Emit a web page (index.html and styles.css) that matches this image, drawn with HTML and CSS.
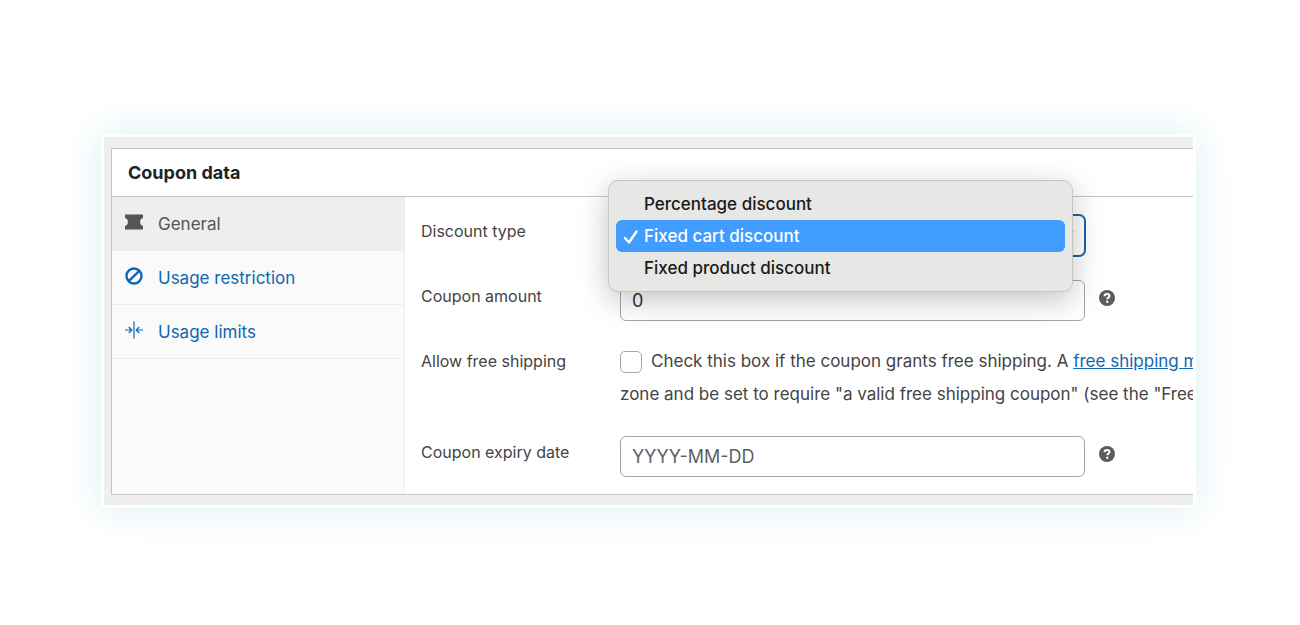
FILE: index.html
```html
<!DOCTYPE html>
<html lang="en">
<head>
    <meta charset="UTF-8">
    <meta name="viewport" content="width=device-width, initial-scale=1.0">
    <title>Coupon data</title>
    <link rel="stylesheet" href="styles.css">
</head>
<body>
    <main class="frame">
        <section class="coupon-box">
            <h2 class="box-title">Coupon data</h2>
            <div class="box-body">
                <nav class="tabs">
                    <a class="tab active" href="#general">
                        <svg class="tab-icon" viewBox="0 0 18 18"><path fill="currentColor" d="M0 1.500h18v3.500a4.200 4.200 0 0 0 0 8v3.500H0V13a4.200 4.200 0 0 0 0-8z"/></svg>
                        General
                    </a>
                    <a class="tab" href="#restriction">
                        <svg class="tab-icon" viewBox="0 0 18 18" fill="none" stroke="currentColor" stroke-width="2.400"><circle cx="9" cy="9" r="7.500"/><path d="M3.800 14.200L14.200 3.800"/></svg>
                        Usage restriction
                    </a>
                    <a class="tab" href="#limits">
                        <svg class="tab-icon" viewBox="0 0 18 18" fill="none" stroke="currentColor" stroke-width="1.200"><path d="M9 .5v17M0 9h6.500M3.800 6l3 3-3 3M18 9h-6.500M14.200 6l-3 3 3 3"/></svg>
                        Usage limits
                    </a>
                </nav>

                <form class="fields">
                    <div class="row">
                        <label for="discount-type">Discount type</label>
                        <div class="select-wrap">
                            <select id="discount-type" class="control focused">
                                <option>Percentage discount</option>
                                <option selected>Fixed cart discount</option>
                                <option>Fixed product discount</option>
                            </select>
                            <svg class="arrow" viewBox="0 0 14 14" fill="none" stroke="#50575e" stroke-width="2"><path d="M1 4l6 6 6-6"/></svg>
                            <ul class="menu" role="listbox" aria-label="Discount type">
                                <li class="option" role="option">Percentage discount</li>
                                <li class="option selected" role="option" aria-selected="true">
                                    <svg class="check" viewBox="0 0 16 16" fill="none" stroke="currentColor" stroke-width="2.400" stroke-linecap="round" stroke-linejoin="round"><path d="M2 9l4 4.500L13.500 2.500"/></svg>
                                    Fixed cart discount
                                </li>
                                <li class="option" role="option">Fixed product discount</li>
                            </ul>
                        </div>
                    </div>
                    <div class="row">
                        <label for="amount">Coupon amount</label>
                        <input id="amount" class="control" type="text" value="0">
                        <svg class="help" viewBox="0 0 16 16"><circle cx="8" cy="8" r="8" fill="#5c5c5c"/><path d="M5.500 6.200C5.600 4.600 6.600 3.900 8 3.900s2.500.8 2.500 2.100c0 1.600-2.300 1.600-2.300 3.300" fill="none" stroke="#fff" stroke-width="2"/><circle cx="8.200" cy="11.800" r="1.200" fill="#fff"/></svg>
                    </div>
                    <div class="row">
                        <label for="free-shipping">Allow free shipping</label>
                        <div class="description">
                            <input id="free-shipping" class="checkbox" type="checkbox">Check this box if the coupon grants free shipping. A <a href="#method">free shipping method</a><br>
                            zone and be set to require "a valid free shipping coupon" (see the "Free
                        </div>
                    </div>
                    <div class="row">
                        <label for="expiry">Coupon expiry date</label>
                        <input id="expiry" class="control" type="text" placeholder="YYYY-MM-DD">
                        <svg class="help" viewBox="0 0 16 16"><circle cx="8" cy="8" r="8" fill="#5c5c5c"/><path d="M5.500 6.200C5.600 4.600 6.600 3.900 8 3.900s2.500.8 2.500 2.100c0 1.600-2.300 1.600-2.300 3.300" fill="none" stroke="#fff" stroke-width="2"/><circle cx="8.200" cy="11.800" r="1.200" fill="#fff"/></svg>
                    </div>
                </form>
            </div>
        </section>
    </main>
</body>
</html>
```
FILE: styles.css
```css
* {
    box-sizing: border-box;
}

body {
    margin: 0;
    min-height: 100vh;
    padding: 134px 104px 80px 101px;
    background: #fff;
    font-family: Inter, "Liberation Sans", sans-serif;
    font-size: 17px;
    color: #444;
}

.frame {
    padding: 11px 0 10px 7px;
    border: 3px solid #fff;
    background: #efeff0;
    background-clip: padding-box;
    box-shadow: 0 0 40px #d9eef4;
}

.coupon-box {
    border: 1px solid #c3c4c7;
    border-right: none;
    background: #fff;
}

.box-title {
    margin: 0;
    padding: 0 16px;
    border-bottom: 1px solid #c3c4c7;
    font-size: 18px;
    font-weight: 700;
    line-height: 47px;
    color: #1d2327;
}

.box-body {
    display: flex;
}

/* left tabs */
.tabs {
    flex: 0 0 293px;
    border-right: 1px solid #eee;
    background: #fafafa;
}

.tab {
    display: flex;
    align-items: center;
    gap: 15px;
    height: 54px;
    padding: 0 13px;
    border-bottom: 1px solid #eee;
    color: #0f67b1;
    text-decoration: none;
}

.tab.active {
    background: #eee;
    color: #555;
}

.tab-icon {
    width: 18px;
    height: 18px;
    margin-bottom: 3px;
}

/* form */
.fields {
    flex: 1;
    min-width: 0;
    display: flex;
    flex-direction: column;
    gap: 24px;
    padding: 18px 0 17px 16px;
}

.row {
    display: flex;
    align-items: flex-start;
}

.row label {
    flex: 0 0 199px;
    font-size: 16px;
    line-height: 32px;
}

.control {
    flex: 0 1 465px;
    width: 100%;
    min-width: 0;
    height: 41px;
    padding: 0 11px;
    border: 1px solid #a4a6a9;
    border-radius: 6px;
    background: #fff;
    font: inherit;
    font-size: 18px;
    color: #2c3338;
}

.control::placeholder {
    color: #5c6167;
    opacity: 1;
}

.control.focused {
    display: block;
    border-color: #0f67b1;
    box-shadow: 0 0 0 1px #0f67b1;
    appearance: none;
}

.help {
    flex: none;
    width: 16px;
    height: 16px;
    margin: 10px 0 0 14px;
}

.description {
    flex: 1;
    min-width: 0;
    padding-bottom: 1px;
    overflow: hidden;
    white-space: nowrap;
    line-height: 33px;
}

.description a {
    color: #0f67b1;
}

.checkbox {
    appearance: none;
    width: 22px;
    height: 22px;
    margin: 0 9px 0 0;
    border: 1px solid #a4a6a9;
    border-radius: 5px;
    background: #fff;
    vertical-align: middle;
}

/* open drop-down */
.select-wrap {
    position: relative;
    flex: 0 1 465px;
}

.arrow {
    position: absolute;
    top: 12px;
    right: 11px;
    width: 14px;
    height: 14px;
}

.menu {
    position: absolute;
    top: -35px;
    left: -12px;
    width: 100%;
    margin: 0;
    padding: 7px;
    list-style: none;
    border: 1px solid #c6c6c5;
    border-radius: 10px;
    background: #e7e7e5;
    box-shadow: 0 8px 30px rgba(0, 0, 0, 0.24);
    font-weight: 500;
    color: #1a1a1a;
}

.option {
    position: relative;
    padding-left: 28px;
    border-radius: 6px;
    line-height: 32px;
}

.option.selected {
    background: #409cff;
    color: #fff;
}

.check {
    position: absolute;
    top: 9px;
    left: 7px;
    width: 16px;
    height: 16px;
}
```
